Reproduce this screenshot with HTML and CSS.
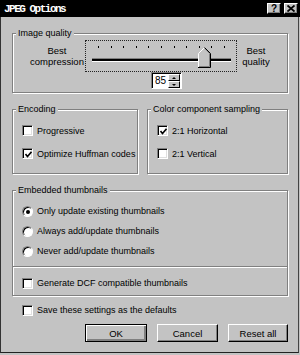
FILE: index.html
```html
<!DOCTYPE html>
<html lang="en">
<head>
    <meta charset="UTF-8">
    <title>JPEG Options</title>
    <link rel="stylesheet" href="styles.css">
</head>
<body>

<div class="dialog">
    <!-- Caption -->
    <div class="titlebar">
        <span class="title">JPEG Options</span>
        <div class="cap-btns">
            <span class="cap-btn help">?</span>
            <span class="cap-btn">
                <svg width="8" height="7" viewBox="0 0 8 7"><path d="M0.5 0.5 L7.5 6.5 M7.5 0.5 L0.5 6.5" stroke="#000" stroke-width="1.8"/></svg>
            </span>
        </div>
    </div>

    <div class="content">
        <fieldset class="group quality">
            <legend>Image quality</legend>
            <div class="quality-row">
                <div class="end-label left">Best<br>compression</div>
                <div class="slider">
                    <div class="ticks">
                        <span></span><span></span><span></span><span></span><span></span><span></span>
                        <span></span><span></span><span></span><span></span><span></span>
                    </div>
                    <div class="track"></div>
                    <svg class="thumb" width="13" height="21" viewBox="0 0 13 21">
                        <polygon points="0.5,6.5 6.5,0.5 12.5,6.5 12.5,20.5 0.5,20.5" fill="#c3c3c3"/>
                        <polyline points="0.5,20 0.5,6.5 6.5,0.5" fill="none" stroke="#fff"/>
                        <polyline points="7,1.5 11.5,6.5 11.5,19.5 1,19.5" fill="none" stroke="#808080"/>
                        <polyline points="6.5,0.5 12.5,6.5 12.5,20.5 0,20.5" fill="none" stroke="#000"/>
                    </svg>
                </div>
                <div class="end-label right">Best<br>quality</div>
            </div>
            <div class="spin">
                <span class="spin-value">85</span>
                <div class="spin-btns">
                    <span class="spin-btn"><i class="arrow up"></i></span>
                    <span class="spin-btn"><i class="arrow down"></i></span>
                </div>
            </div>
        </fieldset>

        <div class="pair">
            <fieldset class="group">
                <legend>Encoding</legend>
                <div class="option"><span class="checkbox"></span>Progressive</div>
                <div class="option"><span class="checkbox checked"><svg width="7" height="7" viewBox="0 0 7 7"><path d="M0.5 3 L2.5 5.5 L6.5 0.8" fill="none" stroke="#000" stroke-width="1.6"/></svg></span>Optimize Huffman codes</div>
            </fieldset>
            <fieldset class="group">
                <legend>Color component sampling</legend>
                <div class="option"><span class="checkbox checked"><svg width="7" height="7" viewBox="0 0 7 7"><path d="M0.5 3 L2.5 5.5 L6.5 0.8" fill="none" stroke="#000" stroke-width="1.6"/></svg></span>2:1 Horizontal</div>
                <div class="option"><span class="checkbox"></span>2:1 Vertical</div>
            </fieldset>
        </div>

        <fieldset class="group thumbs">
            <legend>Embedded thumbnails</legend>
            <div class="radios">
                <div class="option"><span class="radio selected"></span>Only update existing thumbnails</div>
                <div class="option"><span class="radio"></span>Always add/update thumbnails</div>
                <div class="option"><span class="radio"></span>Never add/update thumbnails</div>
            </div>
            <div class="divider"></div>
            <div class="option dcf"><span class="checkbox"></span>Generate DCF compatible thumbnails</div>
        </fieldset>

        <div class="option save"><span class="checkbox"></span>Save these settings as the defaults</div>

        <div class="buttons">
            <button class="btn default">OK</button>
            <button class="btn">Cancel</button>
            <button class="btn reset">Reset all</button>
        </div>
    </div>
</div>

</body>
</html>
```

FILE: styles.css
```css
body {
    margin: 0;
    font-family: "Liberation Sans", Arial, sans-serif;
    font-size: 9px;
    color: #000;
}
.dialog {
    width: 300px;
    height: 355px;
    background: #c3c3c3;
    display: flex;
    flex-direction: column;
}
.titlebar {
    height: 17px;
    background: #000;
    display: flex;
    align-items: center;
    justify-content: space-between;
    padding: 0 2px 0 4px;
}
.title {
    color: #fff;
    font-family: "Liberation Mono", monospace;
    font-weight: bold;
    font-size: 11px;
    letter-spacing: -1.5px;
}
.cap-btns {
    display: flex;
    gap: 3px;
}
.cap-btn {
    width: 14px;
    height: 11px;
    box-sizing: border-box;
    background: #c3c3c3;
    border: 1px solid;
    border-color: #fff #000 #000 #fff;
    box-shadow: inset -1px -1px #808080;
    display: flex;
    align-items: center;
    justify-content: center;
    font-weight: bold;
    font-size: 10px;
    line-height: 9px;
}
.content {
    flex: 1;
    border-left: 1px solid #333;
    border-right: 1px solid #444;
    border-bottom: 1px solid #222;
    margin: 0 1px 2px 0;
    padding: 10px 10px 0 11px;
}
.group {
    margin: 0;
    padding: 0;
    min-width: 0;
    border: 1px solid #808080;
    box-shadow: inset 1px 1px #fff, 1px 1px #fff;
}
.group legend {
    margin-left: 3px;
    padding: 0 2px;
    line-height: 12px;
    background: #c3c3c3;
}

/* image quality */
.quality {
    padding-bottom: 3px;
}
.quality-row {
    display: flex;
    align-items: center;
    margin-top: 1px;
}
.end-label {
    line-height: 11px;
    text-align: center;
    font-size: 9.5px;
}
.end-label.left {
    width: 72px;
    box-sizing: border-box;
    padding-left: 16px;
}
.end-label.right {
    flex: 1;
    padding-right: 12px;
}
.slider {
    position: relative;
    width: 152px;
    height: 32px;
    box-sizing: border-box;
    border: 1px dotted #222;
}
.ticks {
    display: flex;
    justify-content: space-between;
    width: 127px;
    margin: 5px 0 0 12px;
}
.ticks span {
    width: 1px;
    height: 2px;
    background: #000;
}
.track {
    width: 139px;
    height: 2px;
    margin: 10px 0 0 6px;
    background: #000;
    border-top: 1px solid #808080;
    border-bottom: 1px solid #fff;
}
.thumb {
    position: absolute;
    left: 112px;
    top: 6px;
}
.spin {
    display: flex;
    width: 31px;
    height: 17px;
    box-sizing: border-box;
    margin-left: 138px;
    background: #fff;
    border: 1px solid;
    border-color: #808080 #fff #fff #808080;
    box-shadow: inset 1px 1px #000;
}
.spin-value {
    flex: 1;
    padding: 1px 0 0 3px;
    line-height: 14px;
    font-size: 10px;
}
.spin-btns {
    display: flex;
    flex-direction: column;
    width: 12px;
    margin: 1px 1px 0 0;
}
.spin-btn {
    flex: 1;
    background: #c3c3c3;
    border: 1px solid;
    border-color: #fff #000 #000 #fff;
    display: flex;
    align-items: center;
    justify-content: center;
}
.arrow {
    width: 0;
    height: 0;
    border-left: 2px solid transparent;
    border-right: 2px solid transparent;
}
.arrow.up {
    border-bottom: 2px solid #000;
}
.arrow.down {
    border-top: 2px solid #000;
}

/* options */
.pair {
    display: grid;
    grid-template-columns: 126px 1fr;
    column-gap: 9px;
    margin-top: 10px;
}
.pair .group {
    padding: 4px 0 8px;
}
.option {
    display: flex;
    align-items: center;
    gap: 4px;
    height: 23px;
    padding-left: 9px;
    white-space: nowrap;
}
.checkbox {
    width: 11px;
    height: 11px;
    box-sizing: border-box;
    background: #fff;
    border: 1px solid;
    border-color: #808080 #fff #fff #808080;
    box-shadow: inset 1px 1px #000, inset -1px -1px #dfdfdf;
    display: flex;
    align-items: center;
    justify-content: center;
    flex-shrink: 0;
}
.checkbox svg {
    margin: 1px 0 0 1px;
}
.radio {
    position: relative;
    width: 11px;
    height: 11px;
    box-sizing: border-box;
    border-radius: 50%;
    background: #fff;
    border: 1px solid;
    border-color: #808080 #fff #fff #808080;
    box-shadow: inset 1px 1px #000;
    flex-shrink: 0;
}
.radio.selected::after {
    content: "";
    position: absolute;
    left: 3px;
    top: 3px;
    width: 4px;
    height: 4px;
    border-radius: 50%;
    background: #000;
}

/* thumbnails */
.thumbs {
    margin-top: 10px;
    padding-bottom: 2px;
}
.radios {
    padding-top: 5px;
}
.radios .option {
    height: 20px;
}
.divider {
    margin-top: 5px;
    border-top: 1px solid #808080;
    border-bottom: 1px solid #fff;
}
.option.dcf {
    height: 20px;
    margin-top: 5px;
}
.option.save {
    height: 20px;
    margin-top: 4px;
    padding-left: 10px;
}

/* buttons */
.buttons {
    display: flex;
    gap: 10px;
    margin: 4px 0 0 73px;
}
.btn {
    height: 18px;
    width: 61px;
    padding: 0;
    font-family: inherit;
    font-size: 9.5px;
    color: #000;
    background: #c3c3c3;
    border: 1px solid;
    border-color: #fff #000 #000 #fff;
    box-shadow: inset -1px -1px #808080;
}
.btn.default {
    width: 62px;
    border-color: #000;
    box-shadow: inset 1px 1px #fff, inset -2px -2px #808080;
}
.btn.reset {
    width: 60px;
}
```
